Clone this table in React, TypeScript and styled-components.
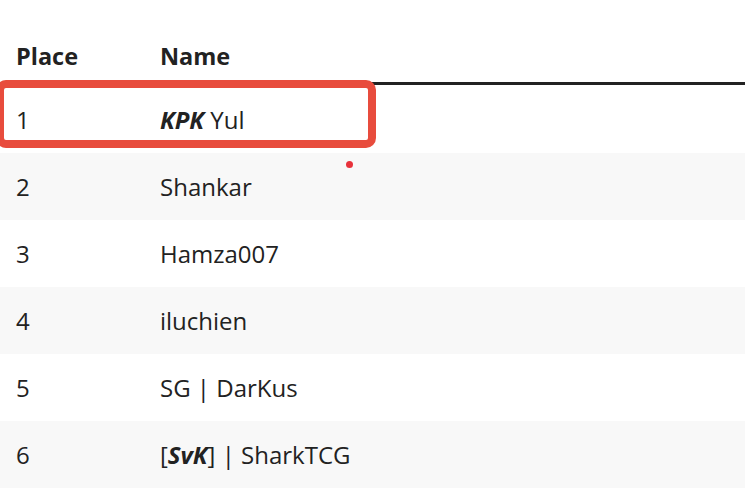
import React, { FC } from "react";
import styled, { createGlobalStyle } from "styled-components";

const GlobalStyle = createGlobalStyle`
  html, body {
    margin: 0;
    padding: 0;
    background: #fff;
  }
  body {
    font-family: "Open Sans", "Liberation Sans", sans-serif;
    color: #222;
  }
`;

const Page = styled.div`
  position: relative;
  width: 745px;
  height: 495px;
  overflow: hidden;
  padding-top: 33px;
  box-sizing: border-box;
`;

const Table = styled.table`
  width: 100%;
  border-collapse: separate;
  border-spacing: 0;
  font-size: 24px;
`;

const HeadCell = styled.th`
  height: 52px;
  box-sizing: border-box;
  padding: 0 0 4px 16px;
  text-align: left;
  font-size: 23.5px;
  font-weight: 700;
  border-bottom: 3px solid #222;
  &:first-child {
    width: 144px;
  }
`;

const Row = styled.tr<{ $shaded: boolean }>`
  background: ${(p) => (p.$shaded ? "#f8f8f8" : "#fff")};
  &:first-child td {
    height: 68px;
  }
`;

const Cell = styled.td`
  height: 67px;
  box-sizing: border-box;
  padding: 0 0 0 16px;
  text-align: left;
  font-weight: 400;
`;

const Tag = styled.b`
  font-style: italic;
  font-weight: 700;
`;

// annotation drawn over the first row
const Highlight = styled.div`
  position: absolute;
  left: -4px;
  top: 80px;
  width: 380px;
  height: 68px;
  box-sizing: border-box;
  border: 8px solid #e84c3d;
  border-radius: 10px;
  pointer-events: none;
`;

const Dot = styled.div`
  position: absolute;
  left: 346px;
  top: 161px;
  width: 7px;
  height: 7px;
  border-radius: 50%;
  background: #e8323b;
`;

const rows: { place: number; name: React.ReactNode }[] = [
  { place: 1, name: <><Tag>KPK</Tag> Yul</> },
  { place: 2, name: "Shankar" },
  { place: 3, name: "Hamza007" },
  { place: 4, name: "iluchien" },
  { place: 5, name: "SG | DarKus" },
  { place: 6, name: <>[<Tag>SvK</Tag>] | SharkTCG</> },
];

const App: FC = () => (
  <Page>
    <GlobalStyle />
    <Table>
      <thead>
        <tr>
          <HeadCell>Place</HeadCell>
          <HeadCell>Name</HeadCell>
        </tr>
      </thead>
      <tbody>
        {rows.map((r, i) => (
          <Row key={r.place} $shaded={i % 2 === 1}>
            <Cell>{r.place}</Cell>
            <Cell>{r.name}</Cell>
          </Row>
        ))}
      </tbody>
    </Table>
    <Highlight />
    <Dot />
  </Page>
);

export default App;
